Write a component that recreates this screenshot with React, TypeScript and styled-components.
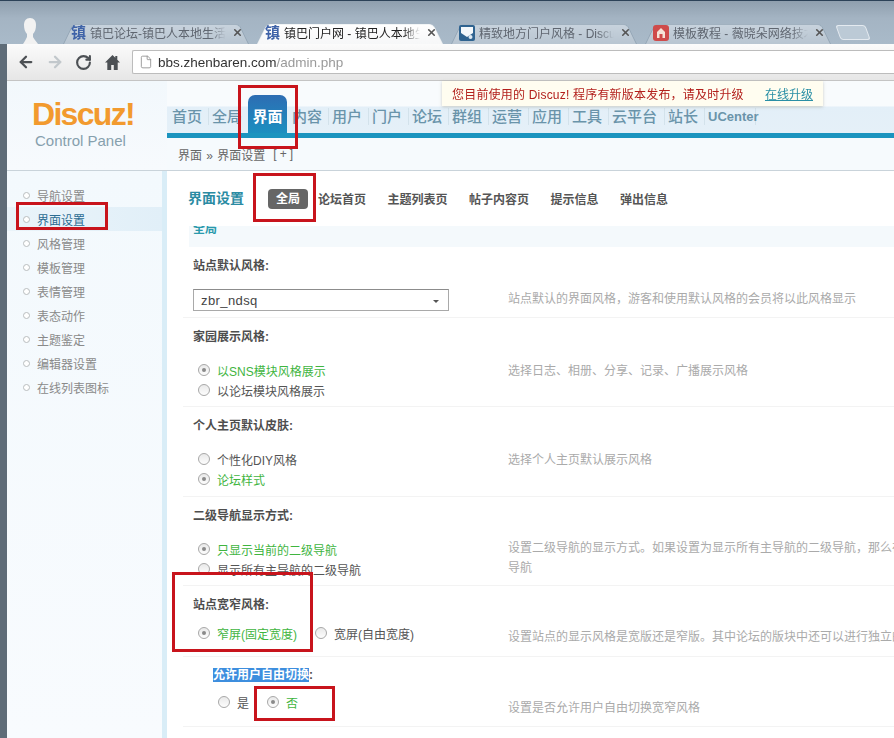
import React from 'react';
import styled, { createGlobalStyle } from 'styled-components';
import { ArrowLeft, ArrowRight, RotateCw, X, File as FileIcon } from 'lucide-react';

const CJK = `"Liberation Sans", "Noto Sans CJK SC", sans-serif`;

const GlobalStyle = createGlobalStyle`
    html, body { margin: 0; padding: 0; background: #fff; }
    * { box-sizing: border-box; }
`;

const Screen = styled.div`
    position: relative;
    width: 894px;
    height: 738px;
    overflow: hidden;
    font-family: ${CJK};
    font-size: 12px;
    color: #555;
    background: #5f6c78;
`;

/* browser chrome */
const TabStrip = styled.div`
    display: flex;
    align-items: flex-end;
    height: 44px;
    padding-left: 20px;
    background: linear-gradient(#8f9fae 0, #a4b4c3 40%, #a9bac9 100%);
    border-top: 1px solid #2c4258;
`;

const Avatar = styled.svg`
    width: 20px;
    height: 27px;
    margin-right: 19px;
    flex: none;
`;

const Tab = styled.div<{ $active?: boolean }>`
    position: relative;
    display: flex;
    align-items: center;
    flex: none;
    width: 194px;
    height: 23px;
    padding: 0 10px 0 12px;
    color: ${(p) => (p.$active ? '#222' : '#5f6670')};
    z-index: ${(p) => (p.$active ? 2 : 1)};

    &::before {
        content: '';
        position: absolute;
        inset: 0 4px 0 4px;
        background: ${(p) => (p.$active ? 'linear-gradient(#fff, #f6f7f8)' : 'linear-gradient(#c8d3dd, #b8c5d1)')};
        border: 1px solid ${(p) => (p.$active ? '#eef1f3' : '#93a5b5')};
        border-bottom: 0;
        border-radius: 5px 5px 0 0;
        transform: perspective(40px) rotateX(12deg);
        transform-origin: bottom;
        z-index: -1;
    }
`;

const Favicon = styled.span`
    flex: none;
    width: 15px;
    margin-right: 4px;
    font-size: 15px;
    line-height: 18px;
    font-weight: 700;
    color: #3f63a8;
`;

const FaviconImage = styled.svg`
    flex: none;
    width: 16px;
    height: 16px;
    margin-right: 4px;
`;

const TabTitle = styled.span`
    flex: 1;
    min-width: 0;
    overflow: hidden;
    white-space: nowrap;
    -webkit-mask-image: linear-gradient(to right, #000 88%, transparent);
    mask-image: linear-gradient(to right, #000 88%, transparent);
`;

const TabClose = styled(X)`
    flex: none;
    width: 11px;
    height: 11px;
    margin-left: 6px;
    stroke-width: 3.5;
    color: #555;
`;

const NewTab = styled.div`
    flex: none;
    width: 30px;
    height: 15px;
    margin: 0 0 4px 3px;
    background: #bccad6;
    border: 1px solid #e4eaf0;
    border-radius: 3px;
    transform: skewX(20deg);
`;

const Toolbar = styled.div`
    display: flex;
    align-items: center;
    height: 37px;
    margin-left: 7px;
    padding-left: 10px;
    background: linear-gradient(#fbfbfb, #e6e6e6);
    border-bottom: 1px solid #c4c4c4;
    position: relative;
    z-index: 3;
`;

const NavGlyph = styled.span<{ $dim?: boolean }>`
    display: flex;
    width: 29px;
    flex: none;
    color: ${(p) => (p.$dim ? '#c2c8cc' : '#4c5054')};
`;

const AddressBar = styled.div`
    display: flex;
    align-items: center;
    flex: 1;
    height: 24px;
    margin-left: -1px;
    padding-left: 6px;
    background: #fff;
    border: 1px solid #bcbcbc;
    border-right: 0;
    border-radius: 2px 0 0 2px;
    font-size: 13.5px;
    color: #333;
    gap: 5px;
`;

const UrlPath = styled.span`
    color: #9a9a9a;
`;

/* page */
const Page = styled.div`
    margin-left: 7px;
    height: 657px;
    background: #fff;
`;

const Header = styled.div`
    display: grid;
    grid-template-columns: 160px 1fr;
    height: 90px;
    background: linear-gradient(#f2f8fc, #f7fafd);
    border-bottom: 1px solid #c9d3da;
`;

const Logo = styled.div`
    display: flex;
    flex-direction: column;
    padding: 16px 0 0 25px;
`;

const LogoMark = styled.span`
    font-size: 32px;
    line-height: 34px;
    font-weight: 700;
    letter-spacing: -1.7px;
    color: #f29a2e;
`;

const LogoCaption = styled.span`
    font-size: 15px;
    line-height: 20px;
    margin: 0 0 0 3px;
    color: #86a0ad;
`;

const HeadRight = styled.div`
    display: flex;
    flex-direction: column;
`;

const NavBar = styled.div`
    display: flex;
    align-items: flex-end;
    height: 57px;
    padding-left: 5px;
    background: linear-gradient(#f8fbfd 0, #f8fbfd 48%, #e3eff8 50%, #e5f0f8 100%);
    border-bottom: 5px solid #1b94bf;
`;

const NavItem = styled.a<{ $latin?: boolean }>`
    flex: none;
    width: ${(p) => (p.$latin ? 'auto' : '40px')};
    height: 27px;
    line-height: 21px;
    font-size: ${(p) => (p.$latin ? '13px' : '15px')};
    font-weight: ${(p) => (p.$latin ? 700 : 500)};
    color: #6a94aa;
    white-space: nowrap;
    background: linear-gradient(#d3e2eb, #d3e2eb) no-repeat right 3px top 2px / 1px 17px;
`;

const NavItemWide = styled(NavItem)`
    width: 56px;
`;

const NavActive = styled.a`
    flex: none;
    display: flex;
    justify-content: center;
    width: 39px;
    height: 38px;
    margin: 0 5px 0 -4px;
    padding-top: 10px;
    font-size: 15px;
    font-weight: 700;
    color: #fff;
    border-radius: 7px 7px 0 0;
    background: linear-gradient(#2d6db3, #1b8fc0);
`;

const Crumb = styled.div`
    display: flex;
    align-items: center;
    flex: 1;
    padding-left: 11px;
    color: #666;
    background: #f6fafd;
    word-spacing: 1px;
`;

const CrumbToggle = styled.span`
    margin-left: 8px;
    letter-spacing: 3px;
`;

const Body = styled.div`
    display: grid;
    grid-template-columns: 160px 1fr;
    height: 567px;
`;

const Sidebar = styled.div`
    padding-top: 12px;
    border-right: 5px solid #d9edf7;
    background: linear-gradient(#f3f9fd, #f8fbfe);
`;

const SideItem = styled.div<{ $active?: boolean }>`
    display: flex;
    align-items: center;
    height: 24px;
    padding-left: 16px;
    gap: 7px;
    color: ${(p) => (p.$active ? '#2b6c92' : '#8a8a8a')};
    background: ${(p) => (p.$active ? 'linear-gradient(to right, #eaf4fa, #e1eff8)' : 'none')};
`;

const SideDot = styled.i`
    width: 7px;
    height: 7px;
    border: 1px solid #b9bdbf;
    border-radius: 50%;
    background: #fff;
`;

const Content = styled.div`
    min-width: 0;
    padding-left: 16px;
    overflow: hidden;
`;

const SubHead = styled.div`
    display: flex;
    align-items: center;
    height: 55px;
    padding: 0 0 0 5px;
    gap: 21.5px;
    white-space: nowrap;
`;

const SubTitle = styled.h1`
    margin: -3px 2.5px 0 0;
    font-size: 14px;
    font-weight: 700;
    color: #2b8ba3;
`;

const SubLink = styled.a`
    font-weight: 700;
    color: #555;
`;

const SubActive = styled.a`
    width: 40px;
    height: 20px;
    margin-right: -11.5px;
    line-height: 20px;
    text-align: center;
    font-weight: 700;
    color: #fff;
    background: #666;
    border-radius: 4px;
`;

const SectionBar = styled.div`
    height: 21px;
    margin-left: 6px;
    padding-left: 4px;
    line-height: 7px;
    overflow: hidden;
    font-weight: 700;
    color: #2a9aac;
    background: #f4f9fc;
`;

const Row = styled.section<{ $height: number; $top?: number }>`
    height: ${(p) => p.$height}px;
    padding: ${(p) => p.$top ?? 9}px 0 0 10px;
    border-bottom: 1px solid #f3f3f3;
`;

const RowTitle = styled.div<{ $indent?: boolean }>`
    height: 20px;
    line-height: 20px;
    font-weight: 700;
    color: #4e4e4e;
    margin-left: ${(p) => (p.$indent ? '20px' : 0)};
`;

const Selected = styled.span`
    color: #fff;
    background: #3d8ede;
`;

const RowBody = styled.div<{ $gap?: number }>`
    display: grid;
    grid-template-columns: 315px 1fr;
    margin-top: ${(p) => p.$gap ?? 13}px;
`;

const Hint = styled.p<{ $shift?: number }>`
    margin: ${(p) => p.$shift ?? 1}px 0 0;
    width: 560px;
    line-height: 20px;
    color: #aaa;
    white-space: nowrap;
`;

const SelectBox = styled.div`
    display: flex;
    align-items: center;
    justify-content: space-between;
    width: 256px;
    height: 22px;
    padding: 0 9px 0 7px;
    border: 1px solid #a9a9a9;
    border-top-color: #8c8c8c;
    font-size: 13px;
    letter-spacing: 0.4px;
    color: #444;
    background: #fff;
`;

const Caret = styled.i`
    width: 0;
    height: 0;
    margin-top: 2px;
    border: 3px solid transparent;
    border-top: 3px solid #555;
    border-bottom: 0;
`;

const RadioStack = styled.div<{ $inset?: number }>`
    display: flex;
    flex-direction: column;
    padding-left: ${(p) => p.$inset ?? 5}px;
`;

const RadioLine = styled.div<{ $inset?: number }>`
    display: flex;
    padding-left: ${(p) => p.$inset ?? 5}px;
`;

const RadioLabel = styled.label<{ $on?: boolean; $gap?: number }>`
    display: flex;
    align-items: center;
    height: 20px;
    gap: 7px;
    margin-right: ${(p) => p.$gap ?? 0}px;
    white-space: nowrap;
    color: ${(p) => (p.$on ? '#3fb53f' : '#555')};
`;

const RadioMark = styled.i<{ $on?: boolean }>`
    position: relative;
    flex: none;
    width: 12px;
    height: 12px;
    border: 1px solid #a8a8a8;
    border-radius: 50%;
    background: linear-gradient(#e9e9e9, #fdfdfd);

    &::after {
        content: '';
        display: ${(p) => (p.$on ? 'block' : 'none')};
        position: absolute;
        inset: 3px;
        border-radius: 50%;
        background: #8a8a8a;
    }
`;

/* the annotations drawn over the capture */
const RedBox = styled.div<{ $x: number; $y: number; $w: number; $h: number }>`
    position: absolute;
    left: ${(p) => p.$x}px;
    top: ${(p) => p.$y}px;
    width: ${(p) => p.$w}px;
    height: ${(p) => p.$h}px;
    border: 3px solid #c8141c;
    z-index: 6;
`;

const Notice = styled.div`
    position: absolute;
    left: 442px;
    top: 81px;
    display: flex;
    align-items: center;
    justify-content: space-between;
    width: 381px;
    height: 25px;
    padding: 0 10px;
    color: #b3201c;
    background: #fffdf0;
    box-shadow: 0 1px 3px rgba(120, 120, 100, 0.35);
    z-index: 5;
`;

const NoticeText = styled.span`
    letter-spacing: 0.2px;
`;

const NoticeLink = styled.a`
    color: #2a8fa5;
    text-decoration: underline;
`;

const sideItems = ['导航设置', '界面设置', '风格管理', '模板管理', '表情管理', '表态动作', '主题鉴定', '编辑器设置', '在线列表图标'];
const navBefore = ['首页', '全局'];
const navAfter = ['内容', '用户', '门户', '论坛', '群组', '运营', '应用', '工具'];

function Radio(props: { on?: boolean; gap?: number; children: React.ReactNode }) {
    return (
        <RadioLabel $on={props.on} $gap={props.gap}>
            <RadioMark $on={props.on} />
            {props.children}
        </RadioLabel>
    );
}

export default function App() {
    return (
        <Screen>
            <GlobalStyle />
            <TabStrip>
                <Avatar viewBox="0 0 20 27">
                    <path d="M10 1c4 0 6 3 6 7 0 4-1 7-3 9v3c1 2 3 4 5 7H3c2-3 3-5 4-7v-3C5 15 4 12 4 8c0-4 2-7 6-7z" fill="#f2f2f2" />
                </Avatar>
                <Tab>
                    <Favicon>镇</Favicon>
                    <TabTitle>镇巴论坛-镇巴人本地生活论坛</TabTitle>
                    <TabClose />
                </Tab>
                <Tab $active>
                    <Favicon>镇</Favicon>
                    <TabTitle>镇巴门户网 - 镇巴人本地生活网站</TabTitle>
                    <TabClose />
                </Tab>
                <Tab>
                    <FaviconImage viewBox="0 0 16 16">
                        <rect width="16" height="16" rx="2" fill="#2f6390" />
                        <path d="M2 2h12v6l-6 4-6-4z" fill="#f4f8fb" />
                        <circle cx="11.500" cy="12" r="2" fill="#dfeaf3" />
                    </FaviconImage>
                    <TabTitle>精致地方门户风格 - Discuz! 模板</TabTitle>
                    <TabClose />
                </Tab>
                <Tab>
                    <FaviconImage viewBox="0 0 16 16">
                        <rect width="16" height="16" rx="3" fill="#cf4b4b" />
                        <path d="M4 7l4-4 4 4v6H4z" fill="#f6e3d8" />
                        <path d="M6.500 9h3v4h-3z" fill="#cf4b4b" />
                    </FaviconImage>
                    <TabTitle>模板教程 - 薇晓朵网络技术有限公司</TabTitle>
                    <TabClose />
                </Tab>
                <NewTab />
            </TabStrip>

            <Toolbar>
                <NavGlyph><ArrowLeft size={18} strokeWidth={3} /></NavGlyph>
                <NavGlyph $dim><ArrowRight size={18} strokeWidth={3} /></NavGlyph>
                <NavGlyph><RotateCw size={17} strokeWidth={3} /></NavGlyph>
                <NavGlyph>
                    <svg width="17" height="17" viewBox="0 0 17 17">
                        <path d="M8.500 1L1 8.500h2.300V16h3.900v-5h2.600v5h3.900V8.500H16l-2.700-2.700V2h-2v1.800z" fill="#4c5054" />
                    </svg>
                </NavGlyph>
                <AddressBar>
                    <FileIcon size={14} strokeWidth={1.4} color="#8a8a8a" />
                    <span>bbs.zhenbaren.com<UrlPath>/admin.php</UrlPath></span>
                </AddressBar>
            </Toolbar>

            <Page>
                <Header>
                    <Logo>
                        <LogoMark>Discuz!</LogoMark>
                        <LogoCaption>Control Panel</LogoCaption>
                    </Logo>
                    <HeadRight>
                        <NavBar>
                            {navBefore.map((n) => <NavItem key={n}>{n}</NavItem>)}
                            <NavActive>界面</NavActive>
                            {navAfter.map((n) => <NavItem key={n}>{n}</NavItem>)}
                            <NavItemWide>云平台</NavItemWide>
                            <NavItem>站长</NavItem>
                            <NavItem $latin>UCenter</NavItem>
                        </NavBar>
                        <Crumb>界面 » 界面设置<CrumbToggle>[+]</CrumbToggle></Crumb>
                    </HeadRight>
                </Header>
                <Body>
                    <Sidebar>
                        {sideItems.map((s) => (
                            <SideItem key={s} $active={s === '界面设置'}>
                                <SideDot />
                                {s}
                            </SideItem>
                        ))}
                    </Sidebar>
                    <Content>
                        <SubHead>
                            <SubTitle>界面设置</SubTitle>
                            <SubActive>全局</SubActive>
                            <SubLink>论坛首页</SubLink>
                            <SubLink>主题列表页</SubLink>
                            <SubLink>帖子内容页</SubLink>
                            <SubLink>提示信息</SubLink>
                            <SubLink>弹出信息</SubLink>
                        </SubHead>
                        <SectionBar>全局</SectionBar>

                        <Row $height={71}>
                            <RowTitle>站点默认风格:</RowTitle>
                            <RowBody>
                                <SelectBox>zbr_ndsq<Caret /></SelectBox>
                                <Hint $shift={0}>站点默认的界面风格，游客和使用默认风格的会员将以此风格显示</Hint>
                            </RowBody>
                        </Row>
                        <Row $height={89}>
                            <RowTitle>家园展示风格:</RowTitle>
                            <RowBody>
                                <RadioStack>
                                    <Radio on>以SNS模块风格展示</Radio>
                                    <Radio>以论坛模块风格展示</Radio>
                                </RadioStack>
                                <Hint>选择日志、相册、分享、记录、广播展示风格</Hint>
                            </RowBody>
                        </Row>
                        <Row $height={90}>
                            <RowTitle>个人主页默认皮肤:</RowTitle>
                            <RowBody>
                                <RadioStack>
                                    <Radio>个性化DIY风格</Radio>
                                    <Radio on>论坛样式</Radio>
                                </RadioStack>
                                <Hint>选择个人主页默认展示风格</Hint>
                            </RowBody>
                        </Row>
                        <Row $height={89}>
                            <RowTitle>二级导航显示方式:</RowTitle>
                            <RowBody>
                                <RadioStack>
                                    <Radio on>只显示当前的二级导航</Radio>
                                    <Radio>显示所有主导航的二级导航</Radio>
                                </RadioStack>
                                <Hint $shift={-1}>
                                    设置二级导航的显示方式。如果设置为显示所有主导航的二级导航，那么在下方显示<br />
                                    导航
                                </Hint>
                            </RowBody>
                        </Row>
                        <Row $height={71}>
                            <RowTitle>站点宽窄风格:</RowTitle>
                            <RowBody $gap={8}>
                                <RadioLine>
                                    <Radio on gap={18}>窄屏(固定宽度)</Radio>
                                    <Radio>宽屏(自由宽度)</Radio>
                                </RadioLine>
                                <Hint $shift={4}>设置站点的显示风格是宽版还是窄版。其中论坛的版块中还可以进行独立的设置</Hint>
                            </RowBody>
                        </Row>
                        <Row $height={70} $top={8}>
                            <RowTitle $indent><Selected>允许用户自由切换</Selected>:</RowTitle>
                            <RowBody $gap={7}>
                                <RadioLine $inset={25}>
                                    <Radio gap={18}>是</Radio>
                                    <Radio on>否</Radio>
                                </RadioLine>
                                <Hint $shift={6}>设置是否允许用户自由切换宽窄风格</Hint>
                            </RowBody>
                        </Row>
                    </Content>
                </Body>
            </Page>

            <Notice>
                <NoticeText>您目前使用的 Discuz! 程序有新版本发布，请及时升级</NoticeText>
                <NoticeLink>在线升级</NoticeLink>
            </Notice>

            <RedBox $x={238} $y={85} $w={60} $h={64} />
            <RedBox $x={253} $y={173} $w={63} $h={49} />
            <RedBox $x={16} $y={202} $w={92} $h={28} />
            <RedBox $x={172} $y={572} $w={141} $h={80} />
            <RedBox $x={254} $y={686} $w={81} $h={35} />
        </Screen>
    );
}
